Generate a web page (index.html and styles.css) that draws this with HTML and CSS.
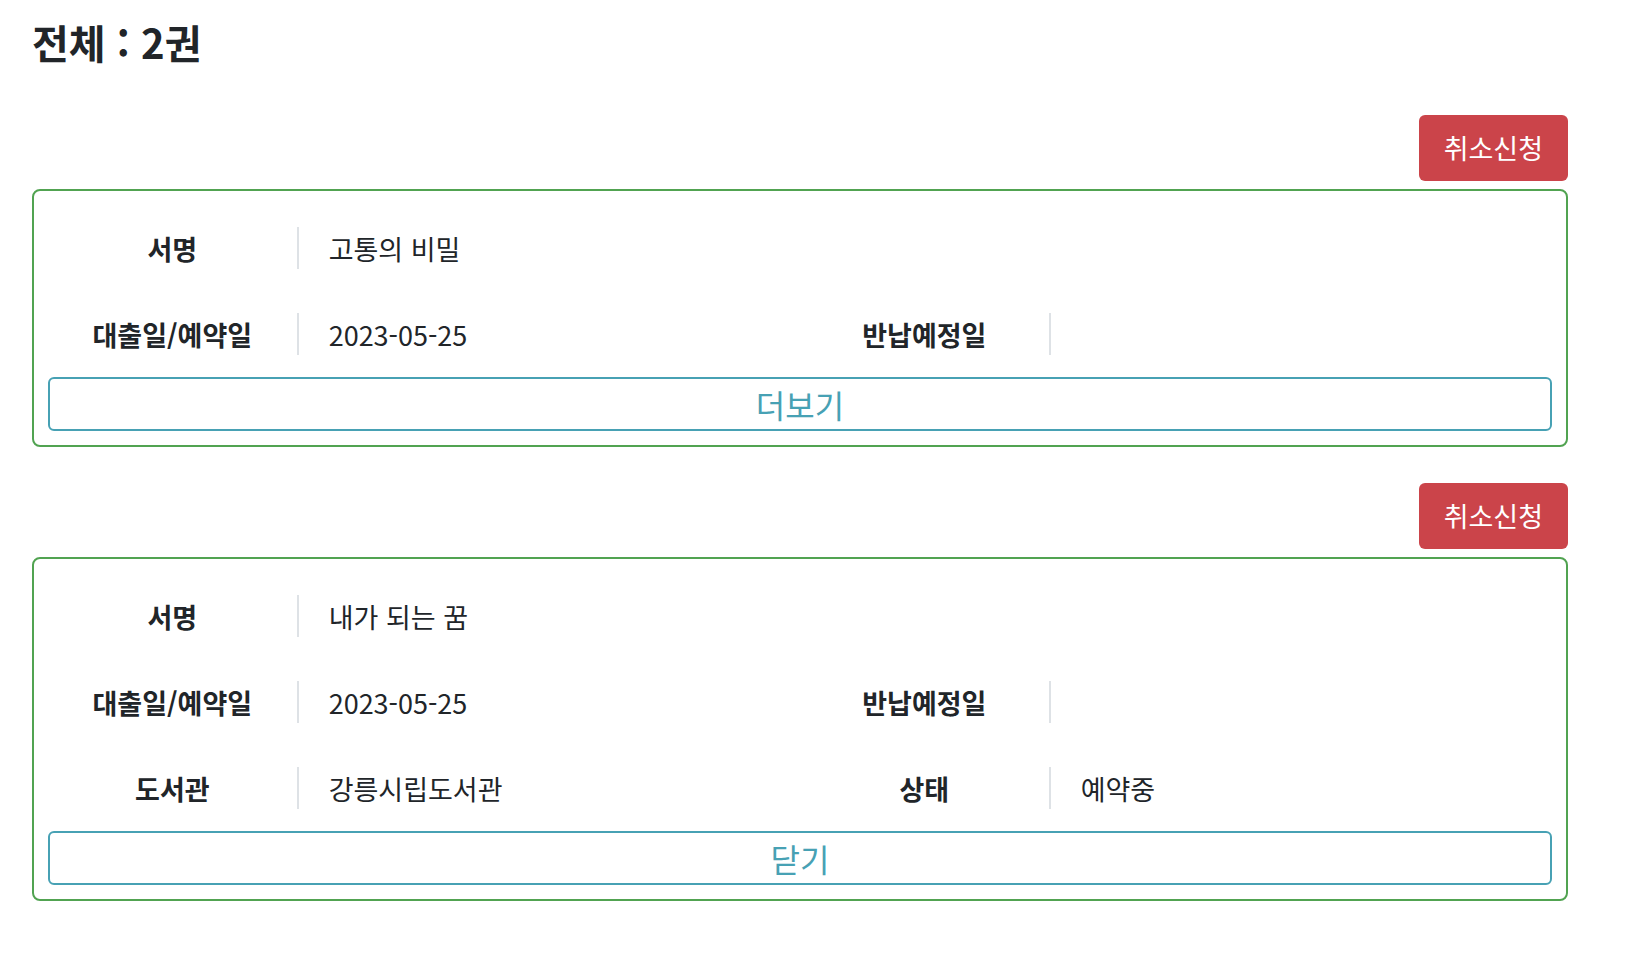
FILE: index.html
```html
<!DOCTYPE html>
<html lang="ko">
<head>
    <meta charset="UTF-8">
    <meta name="viewport" content="width=device-width, initial-scale=1.0">
    <title>대출/예약 현황</title>
    <link rel="stylesheet" href="styles.css">
</head>
<body>

    <h2 class="total">전체 : 2권</h2>

    <div class="book-list">
        <!-- 1번 도서 (접힘) -->
        <div class="book-item">
            <div class="book-head">
                <button class="btn-cancel">취소신청</button>
            </div>
            <div class="book-card">
                <div class="info-row">
                    <div class="info-label">서명</div>
                    <div class="info-value wide">고통의 비밀</div>
                </div>
                <div class="info-row">
                    <div class="info-label">대출일/예약일</div>
                    <div class="info-value">2023-05-25</div>
                    <div class="info-label">반납예정일</div>
                    <div class="info-value"></div>
                </div>
                <button class="btn-toggle">더보기</button>
            </div>
        </div>

        <!-- 2번 도서 (펼침) -->
        <div class="book-item">
            <div class="book-head">
                <button class="btn-cancel">취소신청</button>
            </div>
            <div class="book-card">
                <div class="info-row">
                    <div class="info-label">서명</div>
                    <div class="info-value wide">내가 되는 꿈</div>
                </div>
                <div class="info-row">
                    <div class="info-label">대출일/예약일</div>
                    <div class="info-value">2023-05-25</div>
                    <div class="info-label">반납예정일</div>
                    <div class="info-value"></div>
                </div>
                <div class="info-row">
                    <div class="info-label">도서관</div>
                    <div class="info-value">강릉시립도서관</div>
                    <div class="info-label">상태</div>
                    <div class="info-value">예약중</div>
                </div>
                <button class="btn-toggle">닫기</button>
            </div>
        </div>
    </div>

</body>
</html>
```

FILE: styles.css
```css
body {
    font-family: "Noto Sans CJK KR", "Noto Sans", sans-serif;
    font-size: 27px;
    color: #212529;
    background-color: #fff;
    margin: 0;
    padding: 0 68px 0 32px;
}

.total {
    font-size: 40px;
    font-weight: bold;
    line-height: 48px;
    margin: 0;
    padding-top: 18px;
}

.book-list {
    display: flex;
    flex-direction: column;
    gap: 36px;
    padding-top: 49px;
}

.book-head {
    display: flex;
    justify-content: flex-end;
    margin-bottom: 8px;
}

.btn-cancel {
    font-family: inherit;
    font-size: 27px;
    line-height: 66px;
    padding: 0 25px;
    background-color: #cb444a;
    color: white;
    border: none;
    border-radius: 6px;
    cursor: pointer;
}

.book-card {
    border: 2px solid #51a351;
    border-radius: 8px;
    padding: 14px;
}

.info-row {
    display: grid;
    grid-template-columns: 1fr 2fr 1fr 2fr;
    padding: 22px 0;
}

.info-label,
.info-value {
    height: 42px;
    display: flex;
    align-items: center;
}

.info-label {
    justify-content: center;
    font-weight: bold;
    border-right: 2px solid #dee2e6;
}

.info-value {
    padding-left: 30px;
}

.info-value.wide {
    grid-column: span 3;
}

.btn-toggle {
    display: block;
    width: 100%;
    height: 54px;
    padding: 0;
    font-family: inherit;
    font-size: 32px;
    color: #47a1b4;
    background-color: white;
    border: 2px solid #47a1b4;
    border-radius: 6px;
    cursor: pointer;
}
```
